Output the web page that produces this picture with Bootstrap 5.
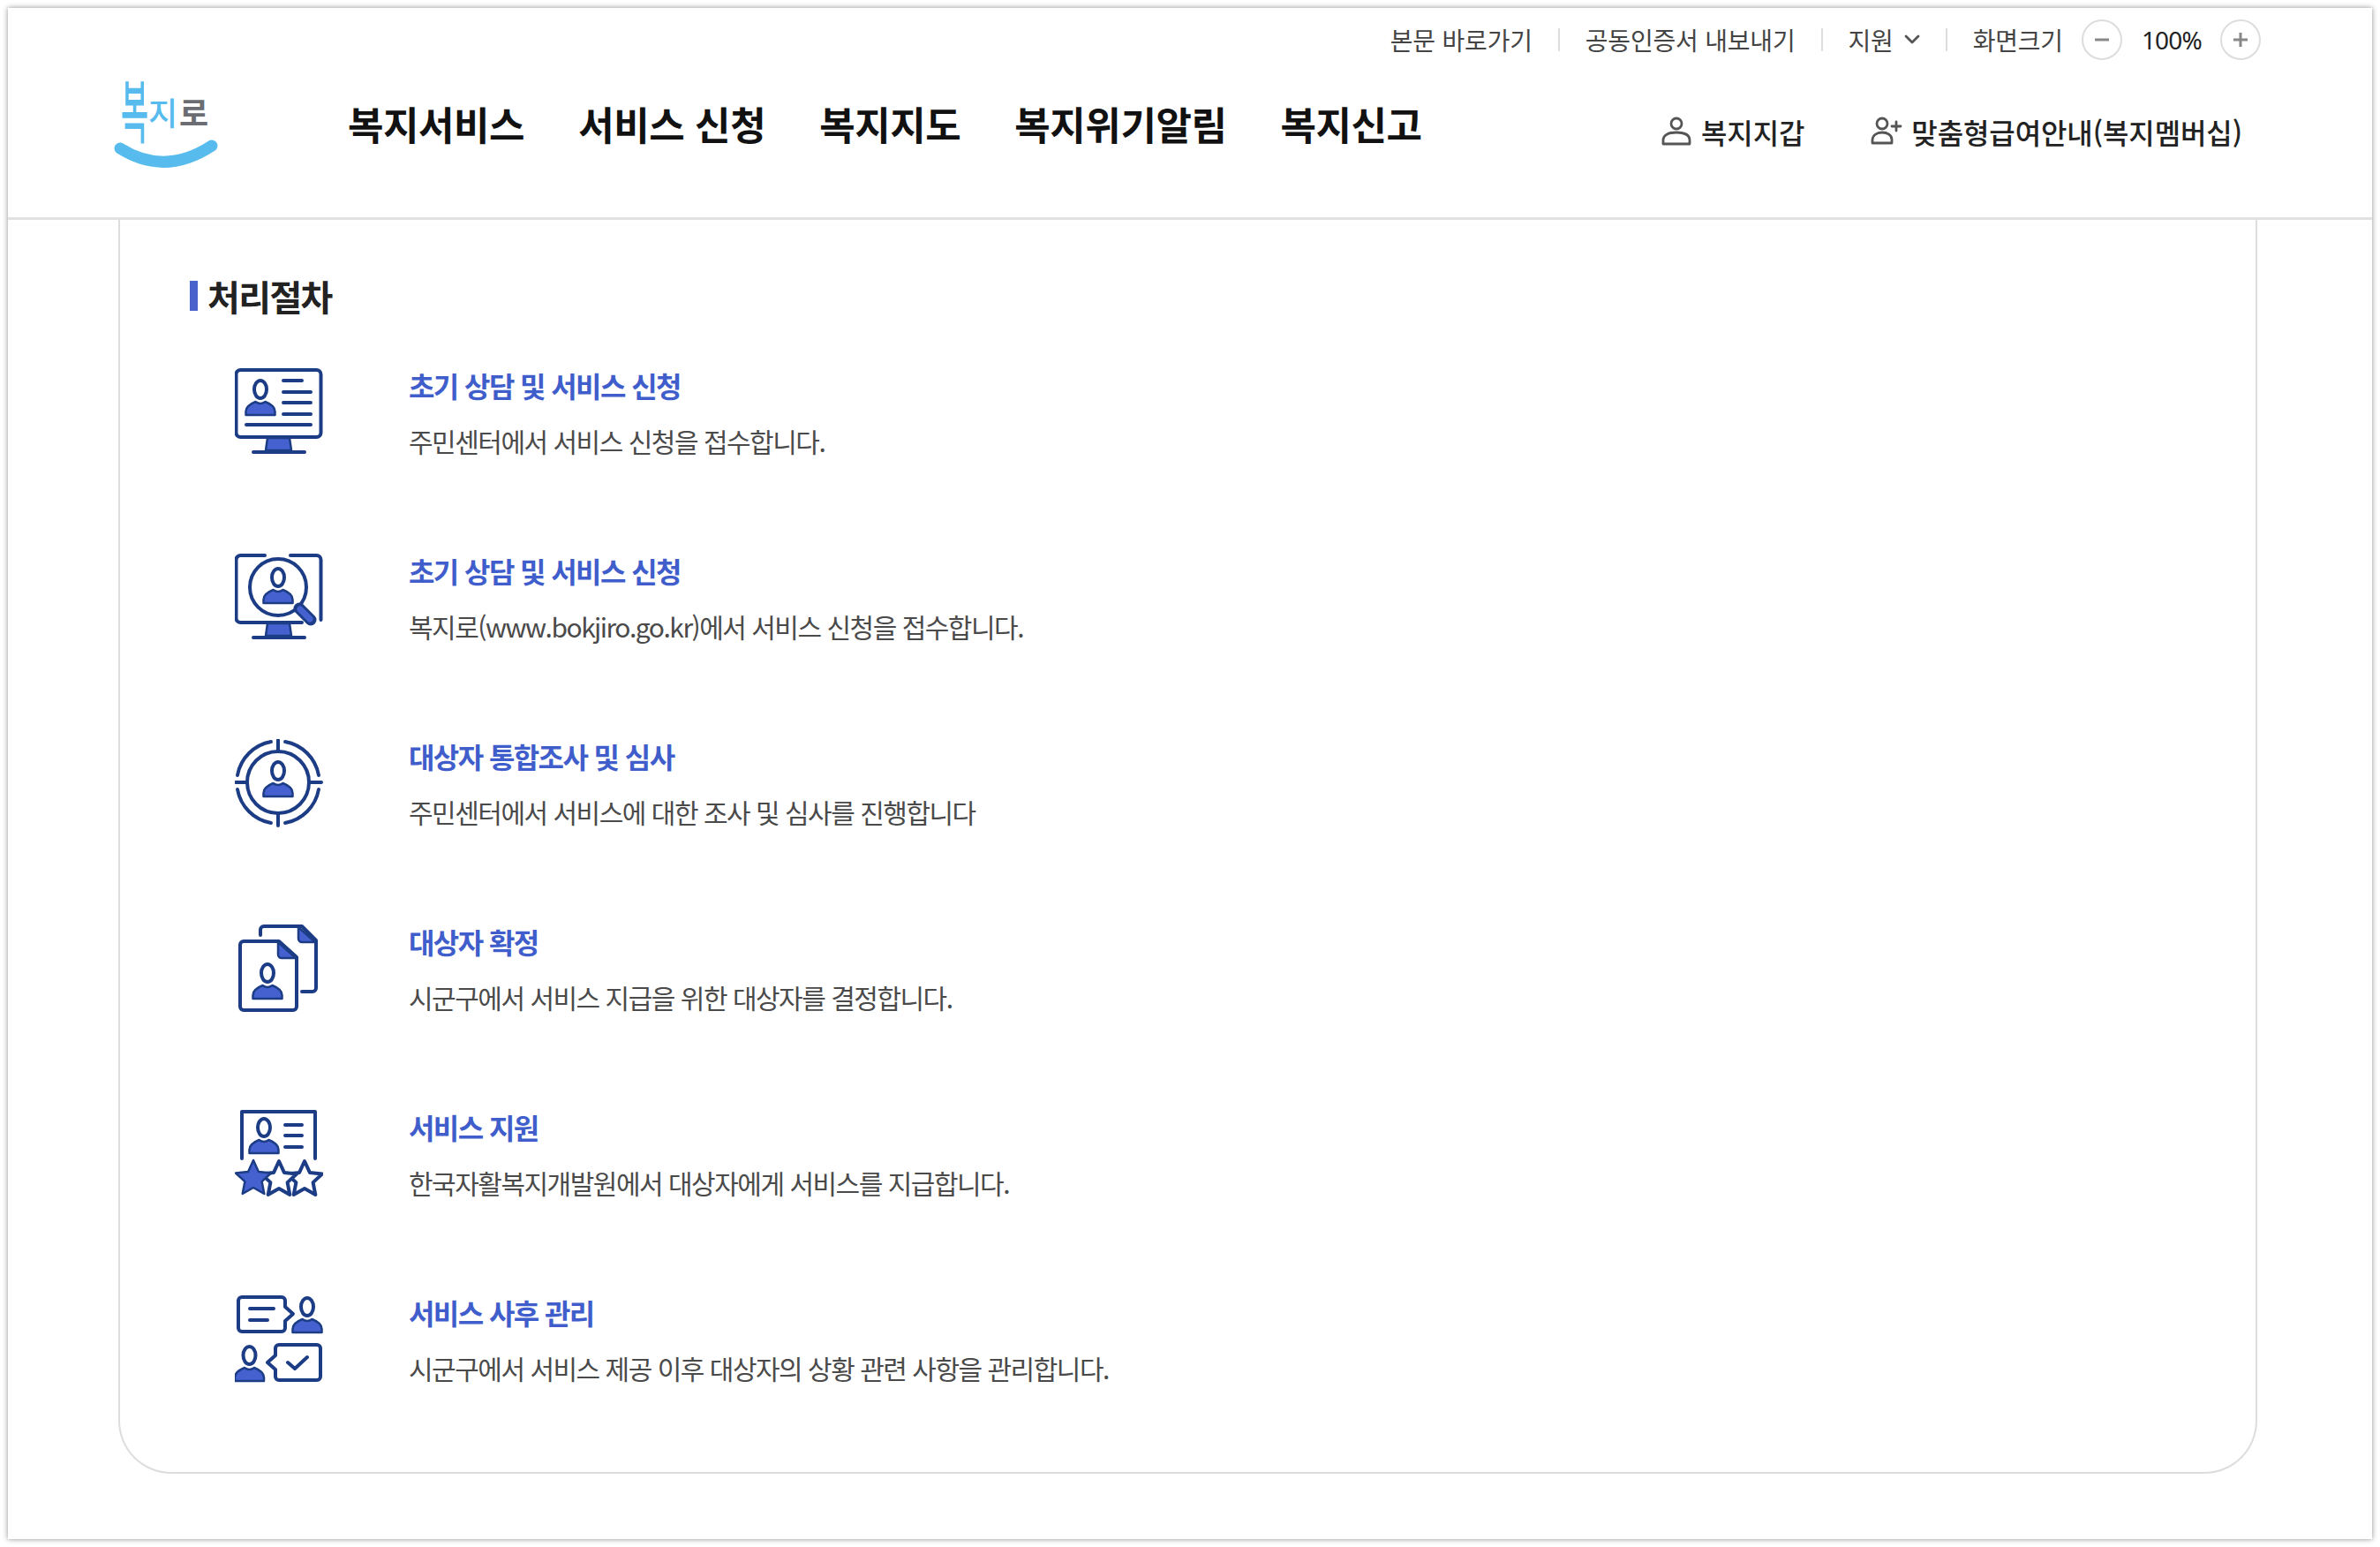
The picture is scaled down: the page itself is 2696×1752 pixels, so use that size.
<!DOCTYPE html>
<html lang="ko">
<head>
<meta charset="utf-8">
<title>처리절차</title>
<link href="https://cdn.jsdelivr.net/npm/bootstrap@5.3.0/dist/css/bootstrap.min.css" rel="stylesheet">
<style>
html,body{background:#fff;height:100%}
body{font-family:"Noto Sans CJK KR","Noto Sans",sans-serif;color:#222;padding:9px;overflow:hidden}
.page-frame{height:1734px;width:2678px;background:#fff;box-shadow:0 0 6px rgba(0,0,0,.45)}
.site-header{height:240px;border-bottom:3px solid #e1e1e1}
.util-bar{height:36px;margin-top:0;padding-top:18px;padding-right:126px;box-sizing:content-box;font-size:28px;letter-spacing:-.2px;color:#444;line-height:36px}
.util-sep{width:2px;height:26px;background:#ddd;margin:0 29px}
.util-chev{margin-left:12px}
.zoom-btn{width:46px;height:46px;margin-left:21px;border:2px solid #ddd;background:#fff;color:#888}
.zoom-val{margin:0 21px 0 22px;color:#222;font-family:"Noto Sans",sans-serif;letter-spacing:-.8px;font-size:28px}
.zoom-val + .zoom-btn{margin-left:0}
.main-bar{padding-left:120px;padding-right:147px;margin-top:25px}
.logo-box{width:120px;height:104px}
.main-nav{margin-left:145px;gap:61px;margin-top:0}
.main-nav a{font-size:44px;font-weight:700;color:#111;letter-spacing:-.45px;line-height:60px;text-decoration:none}
.side-links{gap:75px;margin-top:18px}
.side-links a{font-size:32px;font-weight:500;color:#222;letter-spacing:-.1px;text-decoration:none;gap:10px;line-height:44px}
.proc-card{margin:0 130px 0 125px;height:1420px;border:2px solid #ddd;border-top:0;border-radius:0 0 60px 60px;padding:61px 0 0 79px}
.proc-title{font-size:40px;font-weight:700;color:#222;letter-spacing:-1.6px;line-height:50px;margin-bottom:0;gap:11px}
.proc-bar{width:9px;height:34px;background:#4a62cc}
.proc-list{margin-top:56px;padding-left:51px}
.proc-item{height:210px;gap:97px}
.proc-icon{width:100px;height:100px;flex:none;margin-top:1px}
.proc-name{font-size:32px;font-weight:700;color:#3f5ecb;letter-spacing:-1.6px;line-height:44px;margin-bottom:19px;margin-top:-2px}
.proc-desc{font-size:30px;color:#4a4a4a;letter-spacing:-1.5px;line-height:44px;margin:0}
.ink{fill:none;stroke:#1c3d85;stroke-width:4;stroke-linecap:round;stroke-linejoin:round}
.tint{fill:#4560cf;stroke:#1c3d85;stroke-width:2.5;stroke-linejoin:round}
.tintw{fill:#fff;stroke:#1c3d85;stroke-width:4;stroke-linejoin:round}
.small-ink{fill:none;stroke:#555;stroke-width:2.8;stroke-linecap:round;stroke-linejoin:round}
</style>
</head>
<body>
<div class="page-frame d-flex flex-column">
  <header class="site-header flex-shrink-0">
    <div class="util-bar d-flex justify-content-end align-items-center">
      <span>본문 바로가기</span><i class="util-sep"></i>
      <span>공동인증서 내보내기</span><i class="util-sep"></i>
      <span>지원</span>
      <svg class="util-chev" width="18" height="12" viewBox="0 0 18 12"><path class="small-ink" d="M2 2l7 7 7-7"/></svg>
      <i class="util-sep"></i>
      <span>화면크기</span>
      <span class="zoom-btn rounded-circle d-flex align-items-center justify-content-center"><svg width="20" height="20" viewBox="0 0 20 20"><path d="M2 10h16" stroke="#888" stroke-width="3"/></svg></span>
      <span class="zoom-val">100%</span>
      <span class="zoom-btn rounded-circle d-flex align-items-center justify-content-center"><svg width="20" height="20" viewBox="0 0 20 20"><path d="M2 10h16M10 2v16" stroke="#888" stroke-width="3"/></svg></span>
    </div>
    <div class="main-bar d-flex align-items-center">
      <svg class="logo-box flex-shrink-0 overflow-visible" viewBox="0 0 120 104" role="img" aria-label="복지로">
        <text font-size="40" fill="#58bbee" font-family="Noto Sans CJK KR" font-weight="500" transform="translate(8 68) scale(.85 1.95)">복</text>
        <text x="39" y="54" font-size="36" fill="#58bbee" font-family="Noto Sans CJK KR" font-weight="500">지</text>
        <text x="74" y="54" font-size="36" fill="#6c6d72" font-family="Noto Sans CJK KR" font-weight="700">로</text>
        <path d="M7 80Q58 112 111 77" fill="none" stroke="#58bbee" stroke-width="13" stroke-linecap="round"/>
      </svg>
      <nav class="main-nav d-flex">
        <a href="#">복지서비스</a><a href="#">서비스 신청</a><a href="#">복지지도</a><a href="#">복지위기알림</a><a href="#">복지신고</a>
      </nav>
      <div class="side-links d-flex ms-auto">
        <a href="#" class="d-flex align-items-center"><svg width="36" height="34" viewBox="0 0 36 34"><circle class="small-ink" cx="18" cy="8" r="6"/><path class="small-ink" d="M3 31v-4c0-6 6-9 15-9s15 3 15 9v4z"/></svg>복지지갑</a>
        <a href="#" class="d-flex align-items-center"><svg width="36" height="34" viewBox="0 0 36 34"><circle class="small-ink" cx="13" cy="8" r="6"/><path class="small-ink" d="M2 30v-3c0-6 5-9 11-9s11 3 11 8v4z"/><path class="small-ink" d="M29 6v10M24 11h10"/></svg>맞춤형급여안내(복지멤버십)</a>
      </div>
    </div>
  </header>
  <main class="proc-card flex-shrink-0">
    <h2 class="proc-title d-flex align-items-center"><i class="proc-bar"></i>처리절차</h2>
    <ul class="proc-list list-unstyled mb-0">
      <li class="proc-item d-flex">
        <svg class="proc-icon" viewBox="0 0 100 100">
          <defs>
            <g id="pn"><ellipse class="ink" cx="16.5" cy="10" rx="7" ry="10"/><path class="tint" d="M0 39V35C0 29 6 26 11 24q5.500 4 11 0C27 26 33 29 33 35v4z"/></g>
            <polygon id="st" points="0,-21 5.900,-8.100 20,-6.500 9.600,3.100 12.300,17 0,10 -12.300,17 -9.600,3.100 -20,-6.500 -5.900,-8.100"/>
          </defs>
          <rect class="ink" x="1.500" y="2" width="96" height="76" rx="5"/>
          <use href="#pn" x="12.500" y="14"/>
          <path class="ink" d="M55 14h21M55 27h31M55 39h31M55 52h31M13 64h73"/>
          <path class="tint" d="M37 79h25l2 14H35z"/>
          <path class="ink" d="M21 95h58"/>
        </svg>
        <div><h3 class="proc-name">초기 상담 및 서비스 신청</h3><p class="proc-desc">주민센터에서 서비스 신청을 접수합니다.</p></div>
      </li>
      <li class="proc-item d-flex">
        <svg class="proc-icon" viewBox="0 0 100 100">
          <path class="ink" d="M34 2H6.500a5 5 0 0 0-5 5V73a5 5 0 0 0 5 5H76M63 2H92.500a5 5 0 0 1 5 5V75"/>
          <circle class="ink" cx="49" cy="38" r="32"/>
          <use href="#pn" x="32.500" y="17"/>
          <path d="M73 62l13 13" stroke="#1c3d85" stroke-width="13" stroke-linecap="round"/>
          <path d="M74 63l11 11" stroke="#4560cf" stroke-width="7" stroke-linecap="round"/>
          <path class="tint" d="M37 79h25l2 14H35z"/>
          <path class="ink" d="M21 95h58"/>
        </svg>
        <div><h3 class="proc-name">초기 상담 및 서비스 신청</h3><p class="proc-desc">복지로(www.bokjiro.go.kr)에서 서비스 신청을 접수합니다.</p></div>
      </li>
      <li class="proc-item d-flex">
        <svg class="proc-icon" viewBox="0 0 100 100">
          <path class="ink" d="M41 3A47 47 0 0 0 3 41M57 3A47 47 0 0 1 95 41M41 95A47 47 0 0 1 3 57M57 95A47 47 0 0 0 95 57"/>
          <circle class="ink" cx="49" cy="49" r="35"/>
          <path class="ink" d="M49 1v13M49 84v14M1 49h13M84 49h14"/>
          <use href="#pn" x="32.500" y="26"/>
        </svg>
        <div><h3 class="proc-name">대상자 통합조사 및 심사</h3><p class="proc-desc">주민센터에서 서비스에 대한 조사 및 심사를 진행합니다</p></div>
      </li>
      <li class="proc-item d-flex">
        <svg class="proc-icon" viewBox="0 0 100 100">
          <path class="ink" d="M29 12V6a4 4 0 0 1 4-4H76L92 18V72a4 4 0 0 1-4 4H76"/>
          <path class="tint" d="M72 3L91 20H76a4 4 0 0 1-4-4z"/>
          <path class="ink" d="M10 19H50L70 37V93a4 4 0 0 1-4 4H10a4 4 0 0 1-4-4V23a4 4 0 0 1 4-4z"/>
          <path class="tint" d="M49 20L69 38H53a4 4 0 0 1-4-4z"/>
          <use href="#pn" x="20.500" y="45"/>
        </svg>
        <div><h3 class="proc-name">대상자 확정</h3><p class="proc-desc">시군구에서 서비스 지급을 위한 대상자를 결정합니다.</p></div>
      </li>
      <li class="proc-item d-flex">
        <svg class="proc-icon" viewBox="0 0 100 100">
          <path class="ink" d="M8 55V2H91V55"/>
          <use href="#pn" x="16.500" y="10"/>
          <path class="ink" d="M57 17h19M57 29h19M57 42h19"/>
          <use href="#st" x="79" y="79" class="tintw"/>
          <use href="#st" x="50" y="79" class="tintw"/>
          <use href="#st" x="21" y="78" class="tint"/>
        </svg>
        <div><h3 class="proc-name">서비스 지원</h3><p class="proc-desc">한국자활복지개발원에서 대상자에게 서비스를 지급합니다.</p></div>
      </li>
      <li class="proc-item d-flex">
        <svg class="proc-icon" viewBox="0 0 100 100">
          <path class="ink" d="M8 2H53a4 4 0 0 1 4 4V13L66 21L57 29V37a4 4 0 0 1-4 4H8a4 4 0 0 1-4-4V6a4 4 0 0 1 4-4zM17 15H44M17 28H37"/>
          <use href="#pn" x="65.500" y="3"/>
          <use href="#pn" x="0" y="58"/>
          <path class="ink" d="M50 56H93a4 4 0 0 1 4 4V92a4 4 0 0 1-4 4H50a4 4 0 0 1-4-4V84L37 76L46 68V60a4 4 0 0 1 4-4zM60 76l8 7 14-13"/>
        </svg>
        <div><h3 class="proc-name">서비스 사후 관리</h3><p class="proc-desc">시군구에서 서비스 제공 이후 대상자의 상황 관련 사항을 관리합니다.</p></div>
      </li>
    </ul>
  </main>
</div>
<script src="https://cdn.jsdelivr.net/npm/bootstrap@5.3.0/dist/js/bootstrap.bundle.min.js"></script>
</body>
</html>
